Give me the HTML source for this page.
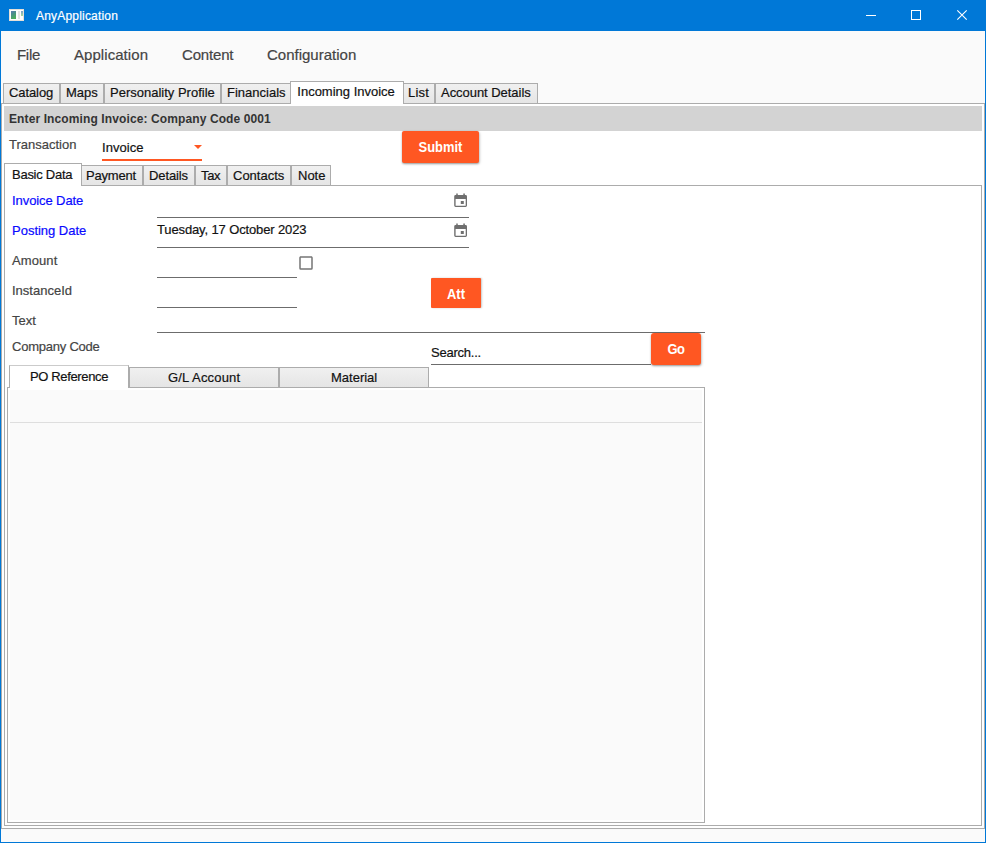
<!DOCTYPE html>
<html>
<head>
<meta charset="utf-8">
<title>AnyApplication</title>
<style>
html,body{margin:0;padding:0;}
body{width:986px;height:843px;overflow:hidden;position:relative;background:#fafafa;font-family:"Liberation Sans",sans-serif;color:#212121;}
.abs{position:absolute;}
.t{position:absolute;white-space:nowrap;font-size:13px;line-height:16px;color:#121212;-webkit-text-stroke:0.2px currentColor;}
.lbl{color:#444;}
.blue{color:#0a0aff;}
.tab{position:absolute;box-sizing:border-box;border:1px solid #acacac;border-bottom:none;background:linear-gradient(#f0f0f0,#e5e5e5);}
.tab.sel{background:#fff;}
.panel{position:absolute;box-sizing:border-box;border:1px solid #acacac;background:#fff;}
.ul{position:absolute;height:1px;background:#6c6c6c;}
.btn{position:absolute;box-sizing:border-box;background:#ff5722;border-radius:2px;box-shadow:0 1px 2px rgba(0,0,0,.3),1px 1px 3px rgba(0,0,0,.15);}
.btn span{position:absolute;left:0;right:0;text-align:center;color:#fff;font-weight:700;font-size:14px;line-height:16px;transform:scaleX(0.925);}
</style>
</head>
<body>
<!-- window frame -->
<div class="abs" id="titlebar" style="left:0;top:0;width:986px;height:31px;background:#0078d7;"></div>
<div class="abs" style="left:0;top:0;width:1px;height:843px;background:#0078d7;"></div>
<div class="abs" style="left:985px;top:0;width:1px;height:843px;background:#0078d7;"></div>
<div class="abs" style="left:0;top:842px;width:986px;height:1px;background:#0078d7;"></div>

<!-- app icon -->
<svg class="abs" style="left:9px;top:9px;" width="15" height="12" viewBox="0 0 15 12" shape-rendering="crispEdges">
  <defs>
    <linearGradient id="ig" x1="0" y1="0" x2="0.4" y2="1"><stop offset="0" stop-color="#5a78b4"/><stop offset="0.45" stop-color="#4a9088"/><stop offset="1" stop-color="#4aac5c"/></linearGradient>
    <linearGradient id="ig2" x1="0" y1="0" x2="0" y2="1"><stop offset="0" stop-color="#7a9cd0"/><stop offset="1" stop-color="#a8dc98"/></linearGradient>
  </defs>
  <rect x="0" y="0" width="15" height="12" fill="#e6dfd8"/>
  <rect x="1" y="1" width="13" height="10" fill="#fdfdfd"/>
  <rect x="2" y="2" width="5" height="8" fill="url(#ig)"/>
  <rect x="9" y="2" width="2" height="8" fill="#e2e2e2"/>
  <rect x="12" y="2" width="2" height="5" fill="url(#ig2)"/>
</svg>
<div class="t" style="left:36px;top:9px;font-size:12px;line-height:14px;color:#fff;letter-spacing:0.19px;">AnyApplication</div>

<!-- caption buttons -->
<svg class="abs" style="left:860px;top:5px;" width="120" height="22" viewBox="0 0 120 22">
  <rect x="6" y="10" width="10" height="1" fill="#fff"/>
  <rect x="51.5" y="5.5" width="9" height="9" fill="none" stroke="#fff" stroke-width="1"/>
  <path d="M97.3 5.3 L106.7 14.7 M106.7 5.3 L97.3 14.7" stroke="#fff" stroke-width="1.1" fill="none"/>
</svg>

<!-- menu -->
<div class="t" style="left:17px;top:46px;font-size:15px;line-height:18px;color:#444;letter-spacing:-0.29px;">File</div>
<div class="t" style="left:74px;top:46px;font-size:15px;line-height:18px;color:#444;letter-spacing:0.06px;">Application</div>
<div class="t" style="left:182px;top:46px;font-size:15px;line-height:18px;color:#444;letter-spacing:-0.18px;">Content</div>
<div class="t" style="left:267px;top:46px;font-size:15px;line-height:18px;color:#444;">Configuration</div>

<!-- OUTER TAB CONTROL -->
<div class="panel" style="left:1px;top:103px;width:984px;height:726px;"></div>
<div class="tab" style="left:3px;top:83px;width:57px;height:20px;"></div>
<div class="tab" style="left:60px;top:83px;width:44px;height:20px;"></div>
<div class="tab" style="left:104px;top:83px;width:117px;height:20px;"></div>
<div class="tab" style="left:221px;top:83px;width:71px;height:20px;"></div>
<div class="tab" style="left:402px;top:83px;width:33px;height:20px;"></div>
<div class="tab" style="left:435px;top:83px;width:103px;height:20px;"></div>
<div class="tab sel" style="left:290px;top:81px;width:114px;height:23px;"></div>
<div class="t" style="left:9px;top:85px;letter-spacing:-0.09px;">Catalog</div>
<div class="t" style="left:66px;top:85px;">Maps</div>
<div class="t" style="left:110px;top:85px;">Personality Profile</div>
<div class="t" style="left:227px;top:85px;">Financials</div>
<div class="t" style="left:297.3px;top:84px;">Incoming Invoice</div>
<div class="t" style="left:408px;top:85px;letter-spacing:0.19px;">List</div>
<div class="t" style="left:441px;top:85px;letter-spacing:-0.04px;">Account Details</div>

<!-- header bar -->
<div class="abs" style="left:4px;top:106px;width:978px;height:25px;background:#d3d3d3;"></div>
<div class="t" style="left:9px;top:112px;font-size:12px;line-height:14px;font-weight:700;color:#333;letter-spacing:0.11px;-webkit-text-stroke:0;">Enter Incoming Invoice: Company Code 0001</div>

<!-- transaction row -->
<div class="t lbl" style="left:9px;top:137px;">Transaction</div>
<div class="t" style="left:102px;top:140px;letter-spacing:0.05px;">Invoice</div>
<svg class="abs" style="left:194px;top:145px;" width="8" height="4" viewBox="0 0 8 4"><path d="M0 0H8L4 4Z" fill="#ff5722"/></svg>
<div class="abs" style="left:102px;top:159px;width:100px;height:2px;background:#ff5722;"></div>
<div class="btn" style="left:402px;top:131px;width:77px;height:32px;"><span style="top:8px;">Submit</span></div>

<!-- LEVEL 2 TAB CONTROL -->
<div class="panel" style="left:4px;top:185px;width:978px;height:641px;"></div>
<div class="tab" style="left:80px;top:165px;width:63px;height:20px;"></div>
<div class="tab" style="left:143px;top:165px;width:52px;height:20px;"></div>
<div class="tab" style="left:195px;top:165px;width:32px;height:20px;"></div>
<div class="tab" style="left:227px;top:165px;width:64px;height:20px;"></div>
<div class="tab" style="left:291px;top:165px;width:40px;height:20px;"></div>
<div class="tab sel" style="left:4px;top:163px;width:78px;height:23px;"></div>
<div class="t" style="left:12px;top:167px;letter-spacing:-0.26px;">Basic Data</div>
<div class="t" style="left:86px;top:168px;letter-spacing:-0.19px;">Payment</div>
<div class="t" style="left:149px;top:168px;letter-spacing:-0.11px;">Details</div>
<div class="t" style="left:201px;top:168px;letter-spacing:-0.34px;">Tax</div>
<div class="t" style="left:233px;top:168px;">Contacts</div>
<div class="t" style="left:298px;top:168px;">Note</div>

<!-- form -->
<div class="t blue" style="left:12.1px;top:193px;letter-spacing:-0.1px;">Invoice Date</div>
<div class="ul" style="left:157px;top:217px;width:312px;"></div>
<div class="t blue" style="left:12.1px;top:223px;letter-spacing:-0.03px;">Posting Date</div>
<div class="t" style="left:157px;top:222px;letter-spacing:-0.13px;">Tuesday, 17 October 2023</div>
<div class="ul" style="left:157px;top:247px;width:312px;"></div>
<svg class="abs cal" style="left:452px;top:192px;" width="18" height="18" viewBox="0 0 18 18"><path fill="#6f6f6f" fill-rule="evenodd" d="M3.6 3H4.25V1.4H5.75V3H11.3V1.4H12.85V3H13.6A1.4 1.4 0 0 1 15 4.4V13.6A1.4 1.4 0 0 1 13.6 15H3.6A1.4 1.4 0 0 1 2.2 13.6V4.4A1.4 1.4 0 0 1 3.6 3ZM3.6 6.9V13.7H13.7V6.9ZM8.8 9H11.8V11.9H8.8Z"/></svg>
<svg class="abs cal" style="left:452px;top:222px;" width="18" height="18" viewBox="0 0 18 18"><path fill="#6f6f6f" fill-rule="evenodd" d="M3.6 3H4.25V1.4H5.75V3H11.3V1.4H12.85V3H13.6A1.4 1.4 0 0 1 15 4.4V13.6A1.4 1.4 0 0 1 13.6 15H3.6A1.4 1.4 0 0 1 2.2 13.6V4.4A1.4 1.4 0 0 1 3.6 3ZM3.6 6.9V13.7H13.7V6.9ZM8.8 9H11.8V11.9H8.8Z"/></svg>

<div class="t lbl" style="left:12px;top:253px;letter-spacing:0.1px;">Amount</div>
<div class="ul" style="left:157px;top:277px;width:140px;"></div>
<svg class="abs" style="left:297px;top:254px;" width="18" height="18" viewBox="0 0 24 24"><path fill="#757575" d="M19,3H5C3.89,3 3,3.89 3,5V19A2,2 0 0,0 5,21H19A2,2 0 0,0 21,19V5C21,3.89 20.1,3 19,3M19,5V19H5V5H19Z"/></svg>
<div class="t lbl" style="left:12px;top:283px;">InstanceId</div>
<div class="ul" style="left:157px;top:307px;width:140px;"></div>
<div class="btn" style="left:431px;top:278px;width:50px;height:30px;border-radius:1px;box-shadow:1px 0 2px rgba(0,0,0,.22);"><span style="top:8px;">Att</span></div>
<div class="t lbl" style="left:12px;top:313px;">Text</div>
<div class="ul" style="left:157px;top:332px;width:548px;"></div>
<div class="t lbl" style="left:12px;top:339px;letter-spacing:-0.23px;">Company Code</div>
<div class="t" style="left:431px;top:345px;letter-spacing:-0.23px;">Search...</div>
<div class="ul" style="left:431px;top:364px;width:220px;"></div>
<div class="btn" style="left:651px;top:333px;width:50px;height:32px;border-radius:3px;"><span style="top:8px;letter-spacing:-0.5px;">Go</span></div>

<!-- LEVEL 3 TAB CONTROL -->
<div class="panel" style="left:7px;top:387px;width:698px;height:436px;"></div>
<div class="abs" style="left:10px;top:390px;width:692px;height:430px;background:#fafafa;"></div>
<div class="abs" style="left:10px;top:422px;width:692px;height:1px;background:#dedede;"></div>
<div class="tab" style="left:129px;top:367px;width:150px;height:20px;"></div>
<div class="tab" style="left:279px;top:367px;width:150px;height:20px;"></div>
<div class="tab sel" style="left:9px;top:365px;width:120px;height:23px;border-top-color:#cbcbcb;"></div>
<div class="t" style="left:30px;top:369px;letter-spacing:-0.36px;">PO Reference</div>
<div class="t" style="left:168px;top:370px;letter-spacing:0.18px;">G/L Account</div>
<div class="t" style="left:331px;top:370px;">Material</div>
</body>
</html>
